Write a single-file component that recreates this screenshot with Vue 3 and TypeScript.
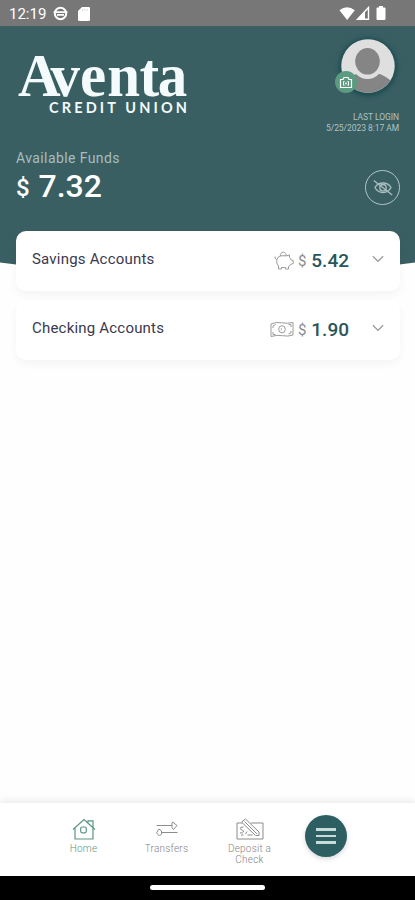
<script setup lang="ts">
interface Account {
  name: string
  balance: string
  icon: 'piggy' | 'cash'
}

const accounts: Account[] = [
  { name: 'Savings Accounts', balance: '5.42', icon: 'piggy' },
  { name: 'Checking Accounts', balance: '1.90', icon: 'cash' },
]
</script>

<template>
  <div class="screen">
    <div class="status">
      <span class="clock">12:19</span>
      <svg class="st-face" width="15" height="15" viewBox="0 0 15 15">
        <circle cx="7.5" cy="7.5" r="5.7" fill="none" stroke="#fff" stroke-width="2" />
        <path d="M0.6 6.2h13.8M4 8.8h7" stroke="#fff" stroke-width="1.8" />
      </svg>
      <svg class="st-sd" width="12" height="14" viewBox="0 0 12 14">
        <path d="M4 0h6.7a1.3 1.3 0 0 1 1.3 1.3v11.4a1.3 1.3 0 0 1-1.3 1.3H1.3A1.3 1.3 0 0 1 0 12.7V4z" fill="#fff" />
        <path d="M4.5 2v2M6.8 2v2M9.1 2v2" stroke="#ccc" stroke-width=".7" />
      </svg>
      <svg class="st-right" width="48" height="16" viewBox="0 0 48 16">
        <path d="M0.5 4.2Q8 -1.5 15.8 4.2L8.1 14z" fill="#fff" />
        <path d="M29.5 1.5V13.3H18.5z" fill="none" stroke="#fff" stroke-width="1.4" />
        <path d="M18 13.500L26 5v8.500z" fill="#fff" />
        <path d="M40 0h4v1.500h1.500q1 0 1 1V13q0 1-1 1h-7q-1 0-1-1V2.500q0-1 1-1H40z" fill="#fff" />
      </svg>
    </div>

    <header class="hero">
      <div class="top">
        <svg class="logo" width="174" height="80" viewBox="0 0 174 80">
          <text class="logo-name" x="0" y="55" dx="0 -10 0 1 -0.5 -1.5" transform="scale(1 1.05)">Aventa</text>
          <text class="logo-sub" x="31" y="75" textLength="138">CREDIT UNION</text>
        </svg>
        <div class="profile">
          <div class="avatar">
            <svg width="54" height="54" viewBox="0 0 54 54">
              <defs><clipPath id="face"><circle cx="27" cy="27" r="26.700" /></clipPath></defs>
              <g clip-path="url(#face)">
                <rect width="54" height="54" fill="#dfdfdf" />
                <path d="M2 54Q4 39 15 35H39Q48 39 52 44V54z" fill="#858585" />
                <ellipse cx="26.500" cy="22.500" rx="16.500" ry="17.500" fill="#dfdfdf" />
                <ellipse cx="26.500" cy="22.300" rx="12.300" ry="13.300" fill="#858585" />
              </g>
            </svg>
            <span class="camera">
              <svg width="14" height="13" viewBox="0 0 14 13" fill="none" stroke="#fff">
                <path d="M1.500 3.500H4L5 1.500H9L10 3.500H12.500V11.500H1.500z" stroke-width="1.200" />
                <path d="M5.500 5.500H4.500V9.300H5.500M8.500 5.500h1V9.300H8.500" stroke-width="1" />
                <circle cx="7" cy="7.400" r=".9" fill="#fff" stroke="none" />
              </svg>
            </span>
          </div>
          <div class="login">LAST LOGIN<br />5/25/2023 8:17 AM</div>
        </div>
      </div>
      <div class="funds">
        <div>
          <div class="funds-label">Available Funds</div>
          <div class="funds-total"><span class="cur">$</span><span>7.32</span></div>
        </div>
        <button class="hide" aria-label="Hide balances">
          <svg width="20" height="16" viewBox="0 0 20 16" fill="none" stroke="#a9bec0" stroke-width="1.300">
            <path d="M2 7.500Q4.500 3 10 3T18 7.500Q15.500 12.500 10 12.500T2 7.500z" />
            <circle cx="10" cy="7.700" r="3.200" />
            <path d="M.8 .5L19.200 15" />
          </svg>
        </button>
      </div>
    </header>

    <main class="accounts">
      <section v-for="a in accounts" :key="a.name" class="card">
        <span class="name">{{ a.name }}</span>
        <svg v-if="a.icon === 'piggy'" class="ic" width="20" height="19" viewBox="0 0 20 19">
          <path d="M1 5.500Q.5 8 2.800 8.500Q4 5 7 4.800H12.500L15.500 4L15.500 6.500Q17 8 17.200 9L19.200 9.500V12.500L17 13.300L14.500 15.500V18H11.500V16.500H7.500V18H4.500V15Q2 12.500 2.800 8.500" />
          <path d="M6.500 5A2.900 2.900 0 1 1 12 5" />
        </svg>
        <svg v-else class="ic" width="24" height="17" viewBox="0 0 24 17">
          <path d="M1 3Q6 .8 11.500 1.800T23 1.500V14Q18 15.800 12.500 14.700T1 15.500z" />
          <path d="M3 7V5L5.500 3.500M18.500 3.500L21 3.700V6M3 11v2.500h2.500M18.500 13L21 12V10" />
          <ellipse cx="12" cy="8.300" rx="3.300" ry="3.600" />
          <path d="M11.300 7v2.600" stroke-width=".7" />
        </svg>
        <span class="amount"><span class="cur">$</span><span class="val">{{ a.balance }}</span></span>
        <svg class="chev" width="12" height="8" viewBox="0 0 12 8"><path d="M.8 1.200L6 6.300L11.200 1.200" /></svg>
      </section>
    </main>

    <nav class="tabs">
      <a class="tab active">
        <svg width="24" height="22" viewBox="0 0 24 22">
          <path d="M1 11.500L12 1.500L23 11.500M3 10V21H21V10M16 4.500V2.800H21V9.500" />
          <rect x="8.700" y="9" width="5.600" height="5.800" rx="1.500" />
        </svg>
        <span>Home</span>
      </a>
      <a class="tab">
        <svg width="24" height="22" viewBox="0 0 24 22">
          <path d="M1.500 7.500H17M17.500 4L22 7.500L18.500 11.500L17 9.500V5.500z" />
          <path d="M22.500 14.500H6.500M4 11L6.500 13V16L4.500 18L1.500 14.800z" />
        </svg>
        <span>Transfers</span>
      </a>
      <a class="tab">
        <svg width="28" height="22" viewBox="0 0 28 22">
          <path d="M6.500 5H1V21H27V5H15M6 3.500L9.500 1L23 14V17.500H19.500L6 4.500z M8.500 3.500L21 16M5 17h2.500M11.500 17h5M11 13.500L9.500 16" />
          <path d="M7.500 9Q4 8.500 4.300 10.800C4.600 12.500 7.800 11.500 7.500 14Q7 15.500 4 14.800" />
        </svg>
        <span>Deposit a<br />Check</span>
      </a>
      <button class="menu" aria-label="Menu"><i></i><i></i><i></i></button>
    </nav>
    <div class="gesture"><span></span></div>
  </div>
</template>

<style>
body { margin: 0; background: #fff; }
</style>

<style scoped>
* { box-sizing: border-box; }
.screen { width: 415px; height: 900px; display: flex; flex-direction: column; background: #fefefe; font-family: Roboto, sans-serif; overflow: hidden; }
button { border: 0; padding: 0; font: inherit; }
svg { display: block; flex: none; }
.status { height: 26px; flex: none; background: #777; color: #fff; display: flex; align-items: center; padding: 1px 28px 0 9px; }
.clock { font-size: 15px; width: 44px; }
.st-sd { margin-left: 10px; }
.st-right { margin-left: auto; }
.hero { height: 244px; flex: none; background: #395f63; color: #fff; padding: 12px 16px 0; clip-path: path("M0 0H415V236.500Q207.500 266 0 236.500Z"); }
.top { display: flex; justify-content: space-between; height: 111px; }
.logo { margin: 0 0 0 2px; }
.logo text { fill: #f4fbfc; }
.logo-name { font: bold 59px "Liberation Serif", serif; font-kerning: none; }
.logo-sub { font: bold 14.500px Lato, sans-serif; }
.profile { display: flex; flex-direction: column; align-items: flex-end; }
.avatar { position: relative; width: 54px; height: 54px; margin: 1px 4px 0 0; border-radius: 50%; box-shadow: 0 1px 4px 2px #1c4c50; }
.camera { position: absolute; left: -6px; top: 32px; width: 22px; height: 22px; border-radius: 50%; background: #5b9b81; display: grid; place-items: center; }
.login { margin: 19px 0 0; font-size: 8.500px; line-height: 10.500px; text-align: right; color: #b0c2c4; white-space: nowrap; letter-spacing: -.06px; }
.funds { display: flex; justify-content: space-between; }
.funds-label { font-size: 14px; line-height: 18px; letter-spacing: .4px; color: #a7bdbf; }
.funds-total { display: flex; align-items: center; font-size: 32px; line-height: 38px; margin-top: -2px; font-weight: 500; }
.funds-total .cur { font-size: 24px; width: 22.500px; padding-top: 4px; }
.hide { width: 35px; height: 35px; margin: 21px -1px 0 0; border: 1.500px solid #b3c5c6; border-radius: 50%; background: none; display: grid; place-items: center; }
.accounts { flex: 1; position: relative; margin-top: -39px; padding: 0 15px 0 16px; display: flex; flex-direction: column; gap: 9px; }
.card { height: 60px; display: flex; align-items: center; padding: 0 16px 2px; background: #fff; border-radius: 10px; box-shadow: 0 4px 9px rgba(0, 0, 0, .045); }
.name { flex: 1; font-size: 15px; letter-spacing: .2px; color: #3a3950; padding-bottom: 2px; }
.ic, .chev { fill: none; stroke: #9b9b9b; stroke-width: 1; }
.amount { display: flex; align-items: center; width: 55px; justify-content: space-between; margin: 0 23px 0 0; }
.amount .cur { font-size: 15px; color: #8b8b8b; padding: 2px 0 0 4px; }
.amount .val { font-size: 19px; font-weight: 500; color: #295659; }
.chev { stroke: #9c9c9c; stroke-width: 1.200; margin-top: -2px; }
.tabs { position: relative; height: 73px; flex: none; display: flex; padding: 12px 0 0 42px; background: #fff; box-shadow: 0 -2px 8px rgba(0, 0, 0, .09); }
.tab { width: 83px; display: flex; flex-direction: column; align-items: center; text-align: center; font-size: 10px; line-height: 11px; letter-spacing: .22px; font-weight: 300; color: #858585; }
.tab svg { margin: 3px 0 3px; fill: none; stroke: #8c8c8c; stroke-width: 1; }
.tab.active { color: #5a9682; }
.tab.active svg { stroke: #5a9682; stroke-width: 1.200; }
.menu { width: 42px; height: 42px; margin-left: 14px; border-radius: 50%; background: #2c5e62; box-shadow: 0 2px 5px rgba(0, 0, 0, .16); display: flex; flex-direction: column; align-items: center; justify-content: center; gap: 4px; }
.menu i { width: 20px; height: 2.500px; background: #c9dadb; }
.gesture { position: relative; height: 24px; flex: none; background: #000; display: flex; justify-content: center; padding-top: 9px; }
.gesture span { width: 115px; height: 5px; border-radius: 3px; background: #fff; }
</style>
